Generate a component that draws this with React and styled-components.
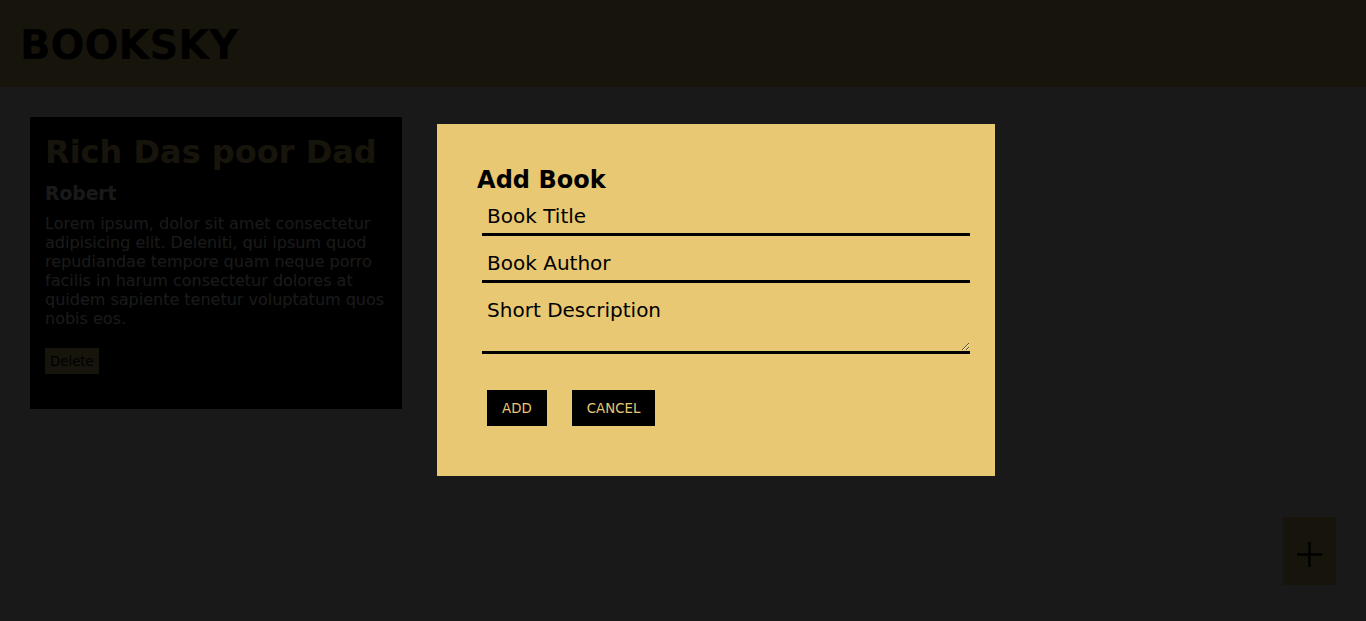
import React from "react";
import styled, { createGlobalStyle } from "styled-components";

const GlobalStyle = createGlobalStyle`
  body {
    margin: 0;
    background: #fff;
    font-family: "DejaVu Sans", Verdana, sans-serif;
  }
`;

const Header = styled.header`
  background-color: #e8c872;
  padding: 22px 20px 19px;
`;

const Logo = styled.h1`
  margin: 0;
  font-size: 40px;
  font-weight: bold;
  color: #000;
`;

const Main = styled.main`
  padding: 30px;
`;

const BookCard = styled.div`
  width: 342px;
  padding: 16px 15px 35px;
  background-color: #000;
`;

const BookTitle = styled.h1`
  margin: 0;
  font-size: 32px;
  color: #e8c872;
`;

const BookAuthor = styled.h3`
  margin: 12px 0 10px;
  font-size: 18.72px;
  color: #fff;
`;

const BookDescription = styled.p`
  margin: 0;
  font-size: 16px;
  color: #fff;
`;

const DeleteButton = styled.button`
  margin-top: 20px;
  height: 26px;
  padding: 0 5px;
  border: none;
  background-color: #e8c872;
  color: #000;
  font-family: inherit;
  font-size: 13.33px;
  cursor: pointer;
`;

const AddFab = styled.button`
  position: fixed;
  right: 30px;
  bottom: 36px;
  width: 53px;
  height: 68px;
  padding: 7px 0 0;
  border: none;
  background-color: #e8c872;
  display: flex;
  align-items: center;
  justify-content: center;
  cursor: pointer;
`;

const Overlay = styled.div`
  position: fixed;
  inset: 0;
  background-color: rgba(0, 0, 0, 0.9);
  z-index: 10;
`;

const Modal = styled.div`
  position: fixed;
  top: 20%;
  left: 32%;
  width: 35%;
  padding: 42px 40px 40px;
  background-color: #e8c872;
  z-index: 20;
`;

const ModalTitle = styled.h2`
  margin: 0;
  font-size: 24px;
  color: #000;
`;

const Form = styled.form`
  display: flex;
  flex-direction: column;
  align-items: flex-start;
`;

const Field = styled.input`
  box-sizing: content-box;
  width: 100%;
  margin: 5px;
  padding: 5px;
  border: none;
  border-bottom: 3px solid #000;
  background: transparent;
  font-family: inherit;
  font-size: 20px;
  color: #000;
  outline: none;

  &::placeholder {
    color: #000;
  }
`;

const TextField = styled.textarea`
  box-sizing: content-box;
  width: 100%;
  height: 48px;
  margin: 5px;
  padding: 5px;
  border: none;
  border-bottom: 3px solid #000;
  background: transparent;
  font-family: inherit;
  font-size: 20px;
  color: #000;
  outline: none;

  &::placeholder {
    color: #000;
  }
`;

const ButtonRow = styled.div`
  display: flex;
  gap: 25px;
  margin-top: 31px;
  padding: 0 10px 10px;
`;

const ModalButton = styled.button`
  height: 36px;
  padding: 0 15px;
  border: none;
  background-color: #000;
  color: #e8c872;
  font-family: inherit;
  font-size: 13.33px;
  cursor: pointer;
`;

const PlusIcon = () => (
  <svg width="25" height="25" viewBox="0 0 25 25">
    <path d="M0 12.5h25M12.5 0v25" stroke="#000" strokeWidth="2.5" />
  </svg>
);

const App = () => {
  return (
    <>
      <GlobalStyle />
      <Header>
        <Logo>BOOKSKY</Logo>
      </Header>
      <Main>
        <BookCard>
          <BookTitle>Rich Das poor Dad</BookTitle>
          <BookAuthor>Robert</BookAuthor>
          <BookDescription>
            Lorem ipsum, dolor sit amet consectetur adipisicing elit. Deleniti, qui ipsum quod
            repudiandae tempore quam neque porro facilis in harum consectetur dolores at quidem
            sapiente tenetur voluptatum quos nobis eos.
          </BookDescription>
          <DeleteButton>Delete</DeleteButton>
        </BookCard>
      </Main>
      <AddFab>
        <PlusIcon />
      </AddFab>
      <Overlay />
      <Modal>
        <ModalTitle>Add Book</ModalTitle>
        <Form onSubmit={(e) => e.preventDefault()}>
          <Field placeholder="Book Title" />
          <Field placeholder="Book Author" />
          <TextField placeholder="Short Description" rows={2} />
        </Form>
        <ButtonRow>
          <ModalButton>ADD</ModalButton>
          <ModalButton>CANCEL</ModalButton>
        </ButtonRow>
      </Modal>
    </>
  );
};

export default App;
